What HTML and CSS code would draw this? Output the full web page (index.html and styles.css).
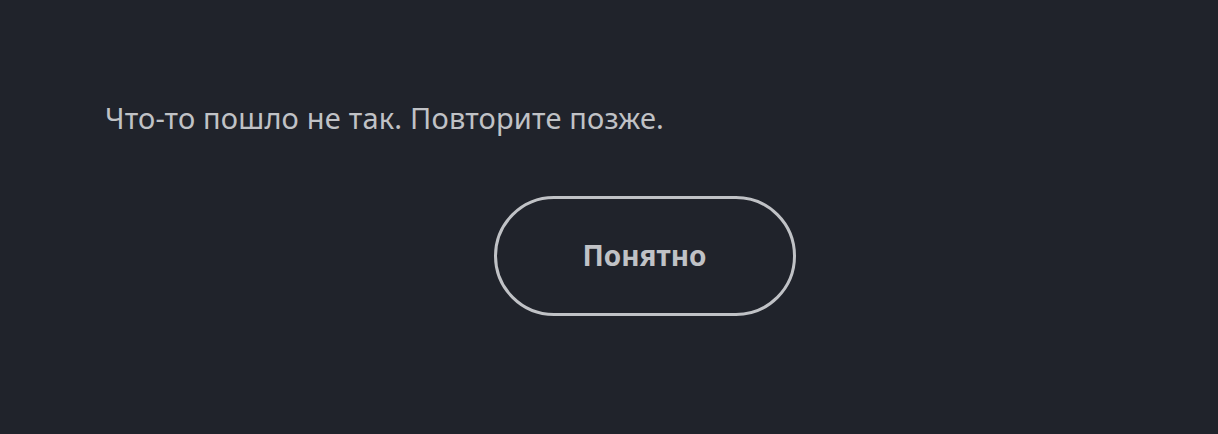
FILE: index.html
```html
<!DOCTYPE html>
<html lang="ru">
<head>
<meta charset="UTF-8">
<meta name="viewport" content="width=device-width, initial-scale=1.0">
<title>Ошибка</title>
<link rel="stylesheet" href="styles.css">
</head>
<body>
    <div class="dialog">
        <p class="message">Что-то пошло не так. Повторите позже.</p>
        <div class="actions">
            <button class="ok">Понятно</button>
        </div>
    </div>
</body>
</html>
```

FILE: styles.css
```css
body {
    margin: 0;
    background-color: #20232b;
    font-family: "Noto Sans", "DejaVu Sans", sans-serif;
    color: #c0c2c6;
    height: 100vh;
}

.dialog {
    padding: 98px 34px 0 105px;
}

.message {
    margin: 0;
    font-size: 29px;
    line-height: 40px;
    letter-spacing: 0.2px;
}

.actions {
    display: flex;
    justify-content: center;
    margin-top: 58px;
}

.ok {
    width: 302px;
    height: 120px;
    padding: 0 0 3px;
    border: 3px solid #c0c2c6;
    border-radius: 60px;
    background: transparent;
    color: #c0c2c6;
    font-family: inherit;
    font-size: 28px;
    font-weight: bold;
    cursor: pointer;
}
```
